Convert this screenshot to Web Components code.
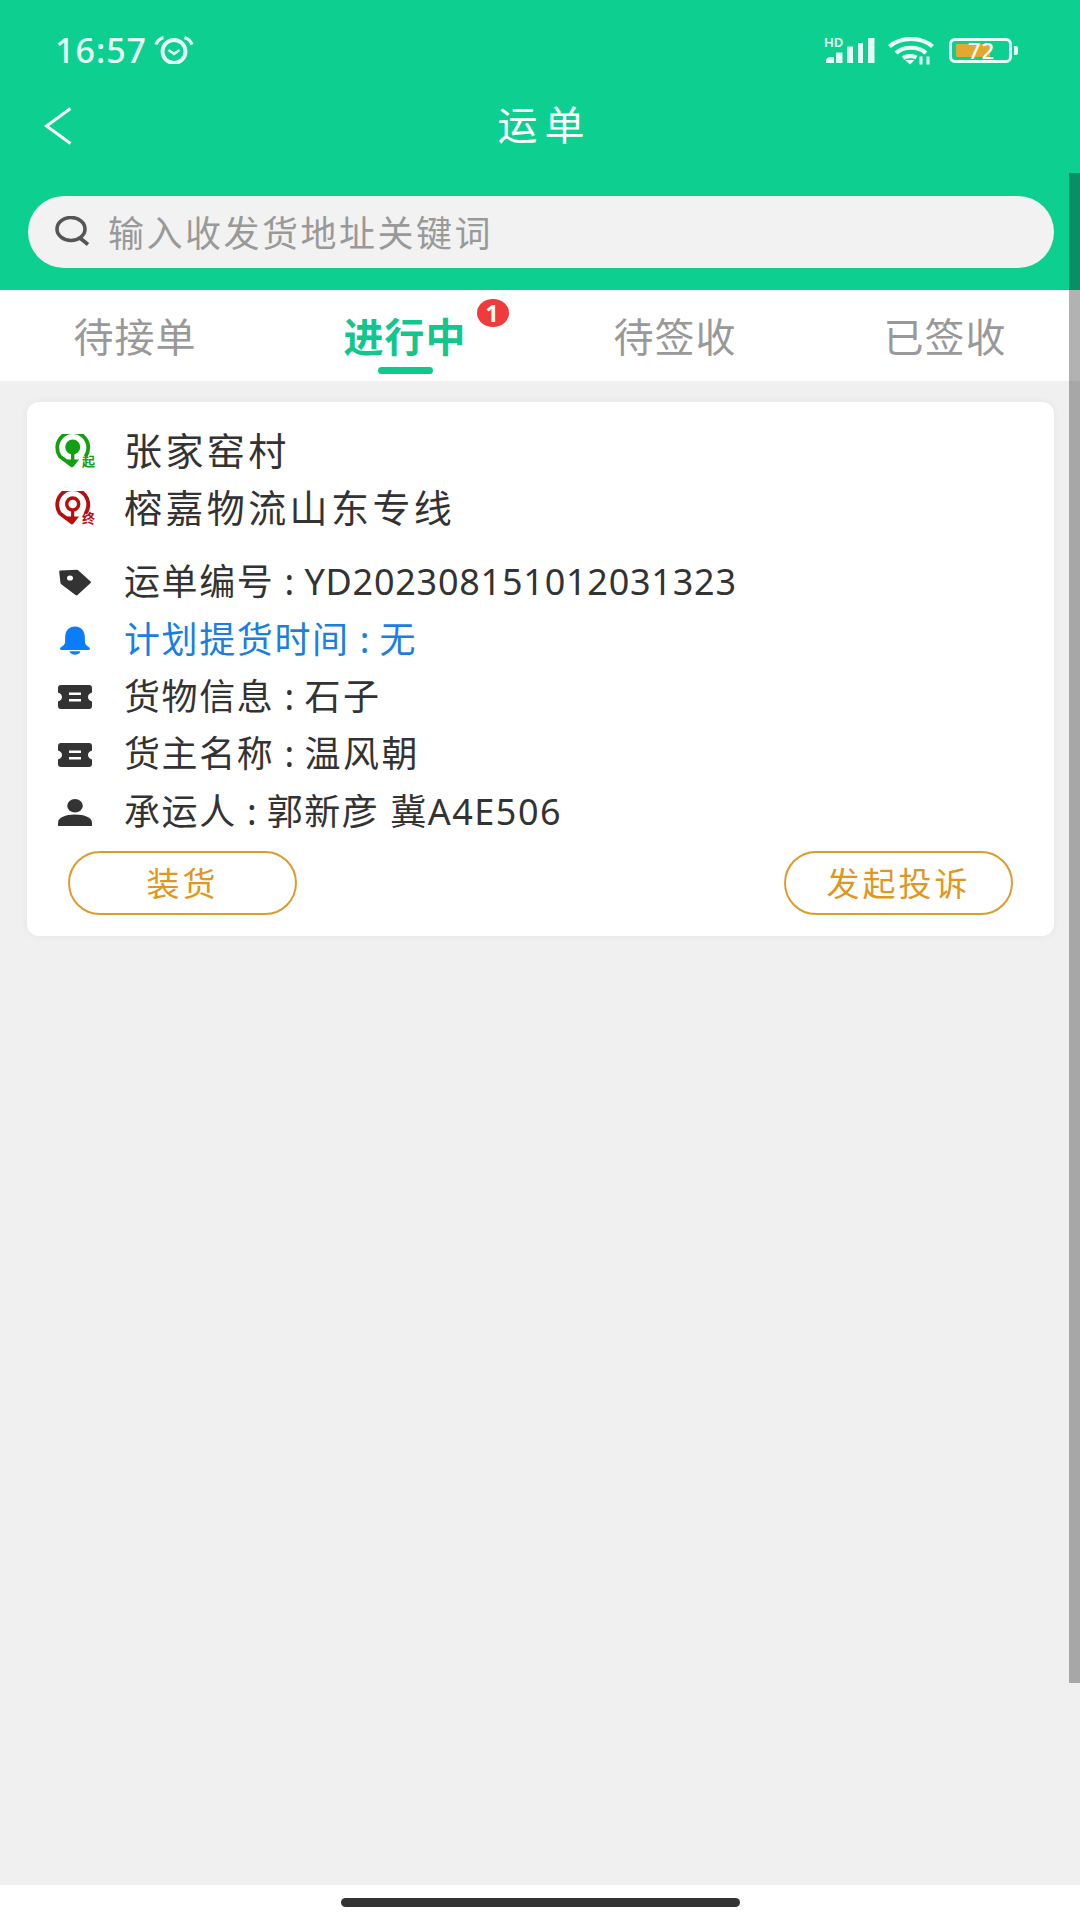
<!DOCTYPE html>
<html lang="zh-CN">
<head>
<meta charset="utf-8">
<title>运单</title>
<style>
html,body{margin:0;padding:0;background:#f0f0f0}
body{font-family:"Noto Sans","Noto Sans CJK SC",sans-serif;color:#333}
</style>
</head>
<body>
<waybill-app>
  <app-header>
    <search-box slot="search">输入收发货地址关键词</search-box>
  </app-header>
  <tab-bar>
    <tab-item>待接单</tab-item>
    <tab-item active badge="1">进行中</tab-item>
    <tab-item>待签收</tab-item>
    <tab-item>已签收</tab-item>
  </tab-bar>
  <page-body>
    <waybill-card>
      <place-row icon="start">张家窑村</place-row>
      <place-row icon="end">榕嘉物流山东专线</place-row>
      <info-row slot="info" icon="tag" label="运单编号" value="YD202308151012031323"></info-row>
      <info-row slot="info" icon="bell" label="计划提货时间" value="无" tone="blue"></info-row>
      <info-row slot="info" icon="ticket" label="货物信息" value="石子"></info-row>
      <info-row slot="info" icon="ticket" label="货主名称" value="温风朝"></info-row>
      <info-row slot="info" icon="person" label="承运人" value="郭新彦 冀A4E506"></info-row>
      <pill-button slot="actions">装货</pill-button>
      <pill-button slot="actions">发起投诉</pill-button>
    </waybill-card>
  </page-body>
  <home-bar></home-bar>
  <scroll-thumb></scroll-thumb>
</waybill-app>

<script>
const ICONS = {
  start: `<svg width="46" height="42" viewBox="0 0 46 42"><path d="M30.500 22.500A15.500 15.500 0 1 0 5 22.500L17.700 32" fill="none" stroke="#12a012" stroke-width="3.800"/><circle cx="17.700" cy="13" r="7.500" fill="#12a012"/><path d="M16 16h3.400v9.500h4.800L17.700 33.500l-6.500-8h4.800z" fill="#12a012"/><text x="27" y="32" font-size="13" font-weight="700" fill="#12a012" font-family="Noto Sans CJK SC">起</text></svg>`,
  end: `<svg width="46" height="42" viewBox="0 0 46 42"><path d="M30.500 22.500A15.500 15.500 0 1 0 5 22.500L17.700 32" fill="none" stroke="#b80d0d" stroke-width="3.800"/><circle cx="17.700" cy="13" r="6" fill="none" stroke="#b80d0d" stroke-width="3.400"/><path d="M16.200 18h3v7.500h4.800L17.700 33.500l-6.500-8h4.800z" fill="#b80d0d"/><text x="27" y="32" font-size="13" font-weight="700" fill="#b80d0d" font-family="Noto Sans CJK SC">终</text></svg>`,
  tag: `<svg width="34" height="27" viewBox="0 0 34 27"><path d="M2.500 1.500 19 .8a2 2 0 0 1 1.400.6L32.600 12.600a1 1 0 0 1 0 1.500L19.500 26a1.600 1.600 0 0 1-2 0L3.600 15.600A3 3 0 0 1 2.400 13.400L1.200 2.800a1.200 1.200 0 0 1 1.300-1.300z" fill="#333"/><ellipse cx="12" cy="9" rx="3" ry="2.600" fill="#fff"/></svg>`,
  bell: `<svg width="34" height="29" viewBox="0 0 34 29"><path d="M17 .5c6 0 9.600 4.300 9.800 10l.2 6c.1 2 1.500 3 4 4.700 1.500 1 1.200 2.800-.6 2.800H3.600c-1.800 0-2.100-1.800-.6-2.800 2.500-1.700 3.900-2.700 4-4.700l.2-6C7.400 4.800 11 .5 17 .5z" fill="#0b7dfa"/><path d="M11.500 25.300h11c-.6 2.300-2.800 3.500-5.500 3.500s-4.900-1.200-5.500-3.500z" fill="#0b7dfa"/></svg>`,
  ticket: `<svg width="34" height="24" viewBox="0 0 34 24"><path fill-rule="evenodd" d="M3 0h28a3 3 0 0 1 3 3v4.500c-2.500.6-4 2.300-4 4.500s1.500 3.900 4 4.500V21a3 3 0 0 1-3 3H3a3 3 0 0 1-3-3v-4.500c2.500-.6 4-2.300 4-4.500S2.500 8.100 0 7.500V3a3 3 0 0 1 3-3zM11 7.500v2.600h12V7.500zM11 13.900v2.600h12v-2.600z" fill="#333"/></svg>`,
  person: `<svg width="34" height="27" viewBox="0 0 34 27"><ellipse cx="17" cy="6.800" rx="7.800" ry="6.800" fill="#333"/><path d="M0 27v-3.500C0 18.500 7.500 15.500 17 15.500s17 3 17 8V27z" fill="#333"/></svg>`
};

function def(name, css, html, extra = {}) {
  const tpl = document.createElement('template');
  tpl.innerHTML = `<style>${css}</style>${html}`;
  customElements.define(name, class extends HTMLElement {
    constructor() {
      super();
      this.attachShadow({mode:'open'}).appendChild(tpl.content.cloneNode(true));
    }
    connectedCallback() { if (extra.init) extra.init.call(this, this.shadowRoot); }
  });
}

def('waybill-app', `
  :host{display:flex;flex-direction:column;width:1080px;height:1920px;position:relative;overflow:hidden;background:#f0f0f0}
`, `<slot></slot>`);

def('app-header', `
  :host{display:block;background:#0ccf90;padding:20px 26px 22px 28px;height:248px}
  .status{height:60px;display:flex;align-items:center;justify-content:space-between}
  .left{display:flex;align-items:center;margin-left:27px;gap:7px}
  .time{font:500 34px/1 "Noto Sans",sans-serif;color:#e6fff6;letter-spacing:1px}
  .right{display:flex;align-items:center;margin-right:36px}
  .signal{margin-right:13px;margin-top:-4px}
  .wifi{margin-right:15px;margin-top:2px}
  .batt{position:relative;width:63px;height:25px;box-sizing:border-box;border:3px solid #e6fff6;border-radius:6px;margin-right:2px}
  .fill{position:absolute;left:4px;top:3px;width:34px;height:13px;background:#e3a82f;border-radius:1px}
  .pct{position:absolute;left:16px;top:-3px;font:500 22px/25px "Noto Sans",sans-serif;color:#fff;letter-spacing:1px}
  .nub{width:4px;height:9px;background:#e6fff6;border-radius:0 2px 2px 0}
  .nav{height:88px;display:flex;align-items:center;justify-content:center;position:relative}
  .back{position:absolute;left:16px;top:27px}
  .title{font:400 40px/1 "Noto Sans CJK SC",sans-serif;color:#fff;letter-spacing:7px;margin-right:-7px;margin-top:-2px}
  .search{margin-top:28px}
`, `
  <div class="status">
    <div class="left">
      <span class="time">16:57</span>
      <svg width="40" height="28" viewBox="0 0 40 28" fill="none" stroke="#e6fff6">
        <circle cx="20" cy="15.500" r="11.500" stroke-width="3.800"/>
        <path d="M14.500 14l5.500 4 5.500-4" stroke-width="2.600"/>
        <path d="M2 8.500C3.500 4.500 6 2.500 9.500 1.500M38 8.500C36.500 4.500 34 2.500 30.500 1.500" stroke-width="3.200"/>
      </svg>
    </div>
    <div class="right">
      <svg class="signal" width="51" height="32" viewBox="0 -6 51 32">
        <text x="0" y="8.500" font-size="13" font-weight="600" fill="#e6fff6" font-family="Noto Sans">HD</text>
        <path d="M2 25v-2.500c0-2 2-3.500 5-3.500h3v6zM12 14.500h6.500V25H12zM23 8.500h6V25h-6zM34 5h5v20h-5zM44 0h6.500v25H44z" fill="#e6fff6"/>
      </svg>
      <svg class="wifi" width="46" height="28" viewBox="0 0 46 28" fill="none" stroke="#e6fff6" stroke-width="4.200">
        <path d="M1.500 9.500C13 -.5 33-.5 44.500 9.500"/>
        <path d="M8 16C15.500 9 30.500 9 38 16"/>
        <path d="M15 21C19 18.500 25 18.500 28.500 20.500"/>
        <path d="M17 23h9.500L22 27.500z" fill="#e6fff6" stroke="none"/>
        <path d="M33 19.500v8M40 19.500v8" stroke-width="3"/>
      </svg>
      <div class="batt"><div class="fill"></div><span class="pct">72</span></div>
      <div class="nub"></div>
    </div>
  </div>
  <div class="nav">
    <svg class="back" width="28" height="38" viewBox="0 0 28 38" fill="none" stroke="#fff" stroke-width="3"><path d="M26.500 1.500 2.500 19l24 17.500"/></svg>
    <span class="title">运单</span>
  </div>
  <div class="search"><slot name="search"></slot></div>
`);

def('search-box', `
  :host{display:flex;align-items:center;height:72px;border-radius:36px;background:#f2f2f2;padding-left:27px;color:#999}
  svg{flex:none;margin-right:17px;margin-top:-2px}
  span{font:400 36px/1 "Noto Sans CJK SC",sans-serif;letter-spacing:2.500px;margin-top:-2px}
`, `
  <svg width="36" height="30" viewBox="0 0 36 30" fill="none" stroke="#555" stroke-width="3.600">
    <ellipse cx="16" cy="13" rx="14" ry="11.500"/><path d="M25 22l8 6.500"/>
  </svg>
  <span><slot></slot></span>
`);

def('tab-bar', `
  :host{display:flex;height:91px;background:#fff}
`, `<slot></slot>`);

def('tab-item', `
  :host{flex:1;display:flex;justify-content:center;color:#999;font:400 40px/1 "Noto Sans CJK SC",sans-serif}
  .t{margin-top:25px;position:relative;height:54px;line-height:40px;letter-spacing:1px}
  :host([active]) .t{color:#13c68d;font-weight:700}
  .bar{display:none;position:absolute;left:34px;bottom:-5px;width:55px;height:7px;border-radius:4px;background:#13c68d}
  :host([active]) .bar{display:block}
  .badge{display:none;position:absolute;left:133px;top:-16px;width:32px;height:28px;border-radius:50%;background:#ef3b3b;color:#fff;font:700 23px/28px "Noto Sans",sans-serif;text-align:center}
`, `<div class="t"><slot></slot><div class="bar"></div><div class="badge"></div></div>`, {
  init(root){
    const b = this.getAttribute('badge');
    if (b){ const el = root.querySelector('.badge'); el.textContent = b; el.style.display='block'; }
  }
});

def('page-body', `
  :host{flex:1;display:block;padding:21px 26px 0 27px;background:#f0f0f0}
`, `<slot></slot>`);

def('waybill-card', `
  :host{display:block;height:534px;box-sizing:border-box;background:#fff;border-radius:12px;box-shadow:0 0 8px rgba(0,0,0,.05);padding:20px 29px 0 29px}
  .info{margin-top:17px}
  .actions{display:flex;justify-content:space-between;padding:10px 12px 0 12px}
`, `
  <div class="places"><slot></slot></div>
  <div class="info"><slot name="info"></slot></div>
  <div class="actions"><slot name="actions"></slot></div>
`);

def('place-row', `
  :host{display:flex;align-items:center;height:57.500px;color:#333}
  .i{flex:none;width:40px;height:34px;margin-left:-1px;margin-right:29px}
  .t{font:400 38px/1 "Noto Sans CJK SC",sans-serif;letter-spacing:3.400px;margin-top:-4px}
`, `<div class="i"></div><div class="t"><slot></slot></div>`, {
  init(root){ root.querySelector('.i').innerHTML = ICONS[this.getAttribute('icon')]; }
});

def('info-row', `
  :host{display:flex;align-items:center;height:57.400px;color:#333}
  :host([tone="blue"]){color:#1a7fe0}
  .i{flex:none;width:40px;margin-left:-1px;margin-right:29px;display:flex;justify-content:center}
  .t{font:400 36px/1 "Noto Sans","Noto Sans CJK SC",sans-serif;letter-spacing:1.600px;white-space:pre;display:flex;align-items:baseline;margin-top:-1px}
  .c{display:inline-block;width:30px;text-align:center;letter-spacing:0}
  .v{letter-spacing:2.600px}
  :host([icon="tag"]) .v{letter-spacing:.75px}
  :host([icon="person"]) .v{letter-spacing:1.500px}
`, `<div class="i"></div><div class="t"><span class="l"></span><span class="c">:</span><span class="v"></span></div>`, {
  init(root){
    root.querySelector('.i').innerHTML = ICONS[this.getAttribute('icon')];
    root.querySelector('.l').textContent = this.getAttribute('label');
    root.querySelector('.v').textContent = this.getAttribute('value');
  }
});

def('pill-button', `
  :host{display:flex;align-items:center;justify-content:center;width:229px;height:64px;box-sizing:border-box;border:2px solid #dc9c2e;border-radius:32px;color:#e09720;font:400 33px/1 "Noto Sans CJK SC",sans-serif;letter-spacing:3px;background:#fff}
`, `<slot></slot>`);

def('home-bar', `
  :host{flex:none;height:35px;background:#fff;display:flex;justify-content:center;padding-top:13px;box-sizing:border-box}
  div{width:399px;height:9px;border-radius:5px;background:#333}
`, `<div></div>`);

def('scroll-thumb', `
  :host{display:block;position:absolute;right:0;top:173px;width:11px;height:1510px;background:rgba(0,0,0,.3)}
`, ``);
</script>
</body>
</html>
